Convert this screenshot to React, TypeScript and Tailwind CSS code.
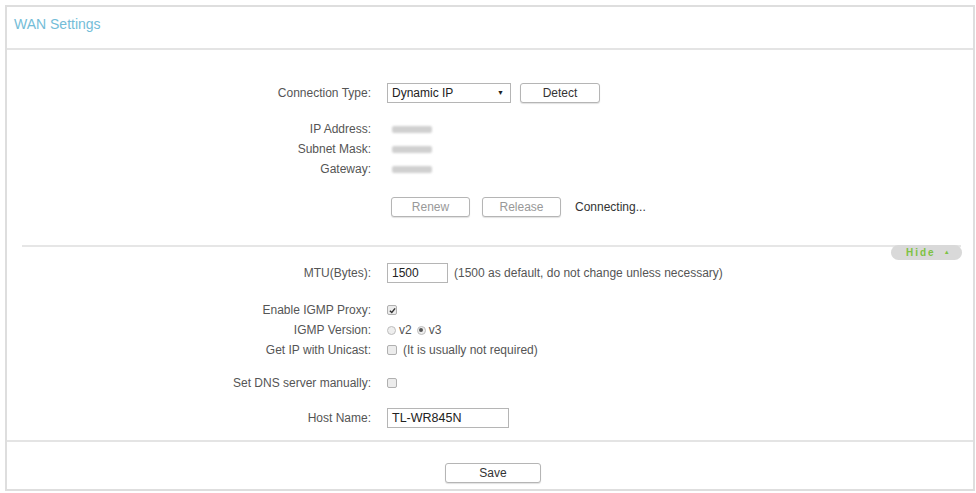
import React from "react";

const font = { fontFamily: '"Liberation Sans", Arial, sans-serif' };

function Label({ children }: { children: React.ReactNode }) {
  return <div className="w-[365px] shrink-0 text-right pr-[1px] text-[#555]">{children}</div>;
}

function Row({ label, className = "", children }: { label: string; className?: string; children?: React.ReactNode }) {
  return (
    <div className={`flex items-center h-[20px] ${className}`}>
      <Label>{label}</Label>
      <div className="ml-[15px] flex items-center">{children}</div>
    </div>
  );
}

function Btn({ children, w, disabled = false }: { children: React.ReactNode; w: string; disabled?: boolean }) {
  return (
    <button
      className={`${w} h-[20px] rounded-[3px] border border-[#b5b5b5] bg-white shadow-[0_1px_1px_rgba(0,0,0,0.12)] text-[12px] leading-none ${
        disabled ? "text-[#999]" : "text-[#333]"
      }`}
    >
      {children}
    </button>
  );
}

function Checkbox({ checked = false }: { checked?: boolean }) {
  return (
    <span className="w-[10px] h-[10px] rounded-[2px] border border-[#b0b0b0] bg-[#ececec] flex items-center justify-center">
      {checked && (
        <svg width="7" height="7" viewBox="0 0 8 8">
          <path d="M1 4.2 L3.2 6.3 L7 1.5" fill="none" stroke="#333" strokeWidth="1.6" />
        </svg>
      )}
    </span>
  );
}

function Radio({ checked = false }: { checked?: boolean }) {
  return (
    <span className="w-[9px] h-[9px] rounded-full border border-[#bdbdbd] bg-[#eee] flex items-center justify-center">
      {checked && <span className="w-[4px] h-[4px] rounded-full bg-[#555]" />}
    </span>
  );
}

function Blur() {
  return <div className="ml-[5px] w-[40px] h-[7px] rounded-[2px] bg-[#d0d0d0] blur-[1px]" />;
}

export default function App() {
  return (
    <div className="min-h-[493px] bg-white pt-[5px] pl-[5px] text-[12px]" style={font}>
      <div className="w-[970px] h-[486px] border-2 border-[#dedede] flex flex-col">
        <div className="h-[43px] shrink-0 border-b-2 border-[#e4e4e4] pl-[7px] pt-[9px] text-[14px] leading-[16px] text-[#74bdd8]">
          WAN Settings
        </div>

        <div className="flex-1">
          <Row label="Connection Type:" className="mt-[33px]">
            <div className="w-[124px] h-[20px] border border-[#b5b5b5] flex items-center justify-between pl-[4px] pr-[6px] text-[#222]">
              <span>Dynamic IP</span>
              <span className="text-[7px]">▼</span>
            </div>
            <div className="ml-[9px]">
              <Btn w="w-[80px]">Detect</Btn>
            </div>
          </Row>

          <Row label="IP Address:" className="mt-[16px]">
            <Blur />
          </Row>
          <Row label="Subnet Mask:">
            <Blur />
          </Row>
          <Row label="Gateway:">
            <Blur />
          </Row>

          <div className="flex items-center h-[20px] mt-[18px] pl-[384px]">
            <Btn w="w-[79px]" disabled>
              Renew
            </Btn>
            <div className="ml-[12px]">
              <Btn w="w-[79px]" disabled>
                Release
              </Btn>
            </div>
            <span className="ml-[14px] text-[#333]">Connecting...</span>
          </div>

          <div className="relative mt-[28px] ml-[15px] mr-[12px] h-[2px] bg-[#e6e6e6]">
            <div className="absolute right-[-1px] top-0 h-[15px] w-[71px] rounded-full bg-[#d9d9d9] flex items-center pl-[15px] text-[10px] font-bold tracking-[2px] text-[#7dc243]">
              Hide
              <span className="ml-[8px] text-[6px]">▲</span>
            </div>
          </div>

          <Row label="MTU(Bytes):" className="mt-[16px]">
            <div className="w-[61px] h-[20px] border border-[#b5b5b5] flex items-center pl-[4px] text-[#222]">1500</div>
            <span className="ml-[6px] text-[#555]">(1500 as default, do not change unless necessary)</span>
          </Row>

          <Row label="Enable IGMP Proxy:" className="mt-[17px]">
            <Checkbox checked />
          </Row>
          <Row label="IGMP Version:">
            <Radio />
            <span className="ml-[3px] text-[#555]">v2</span>
            <span className="ml-[5px]">
              <Radio checked />
            </span>
            <span className="ml-[3px] text-[#555]">v3</span>
          </Row>
          <Row label="Get IP with Unicast:">
            <Checkbox />
            <span className="ml-[6px] text-[#555]">(It is usually not required)</span>
          </Row>

          <Row label="Set DNS server manually:" className="mt-[13px]">
            <Checkbox />
          </Row>

          <Row label="Host Name:" className="mt-[15px]">
            <div className="w-[122px] h-[20px] border border-[#b5b5b5] flex items-center pl-[4px] text-[12.5px] text-[#222]">
              TL-WR845N
            </div>
          </Row>
        </div>

        <div className="h-[49px] shrink-0 border-t-2 border-[#e4e4e4] flex justify-center pt-[21px] pl-[6px]">
          <Btn w="w-[96px]">Save</Btn>
        </div>
      </div>
    </div>
  );
}
